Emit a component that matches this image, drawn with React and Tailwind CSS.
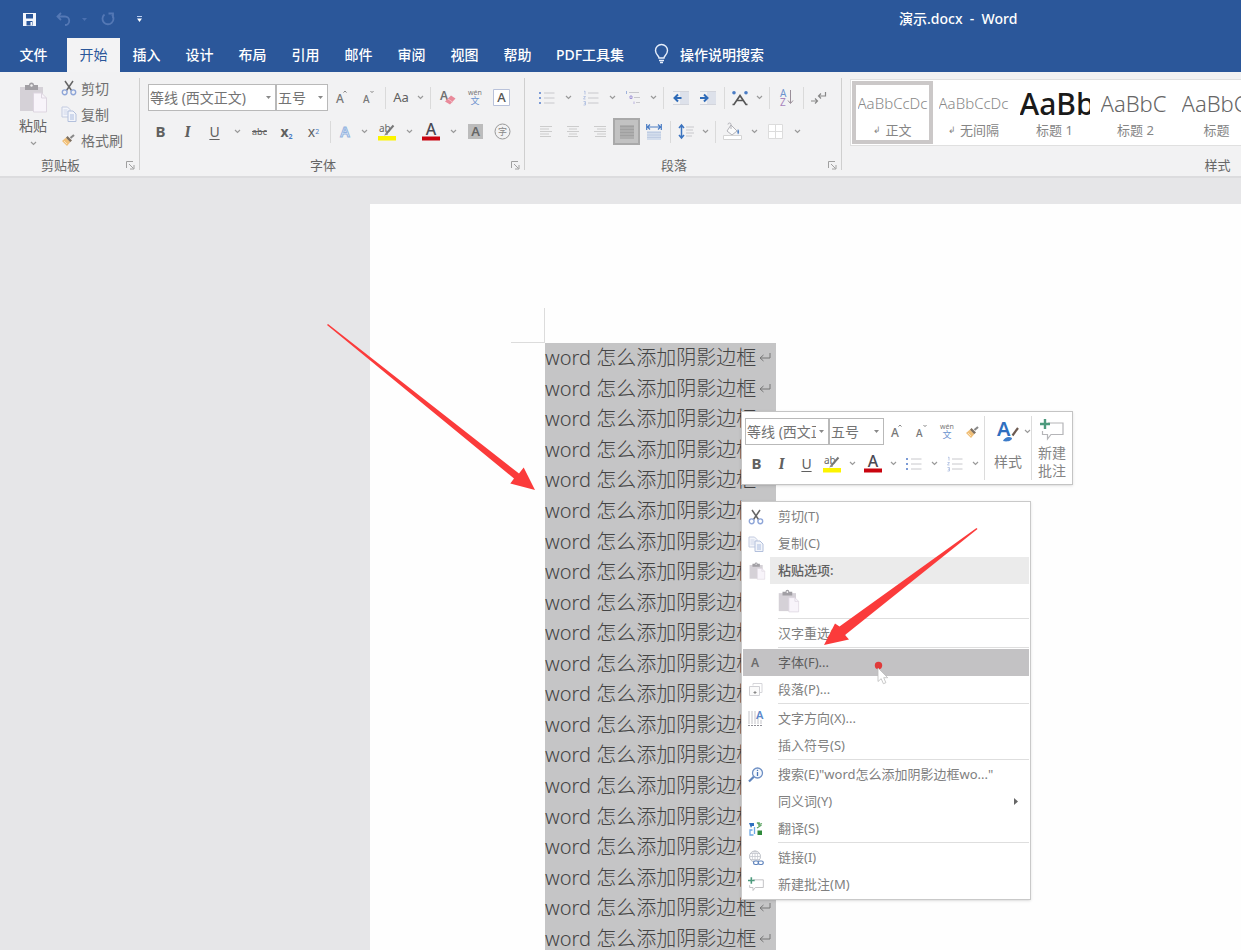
import React from "react";

const TABS = ["插入", "设计", "布局", "引用", "邮件", "审阅", "视图", "帮助"];
const LINES = Array.from({ length: 20 }, (_, i) => i);

/* ---------- icons ---------- */

const Svg = ({ w = 16, h = 16, box, children, className = "" }) => (
  <svg width={w} height={h} viewBox={box || `0 0 ${w} ${h}`} fill="none" aria-hidden="true" className={`shrink-0 overflow-visible ${className}`}>
    {children}
  </svg>
);

const Chevron = () => (
  <Svg w={7} h={5}>
    <path d="M1 1l2.500 2.400L6 1" stroke="#9a9a9a" strokeWidth="1.200" />
  </Svg>
);

const Triangle = () => (
  <Svg w={5} h={3}>
    <path d="M0 0h5L2.500 3z" fill="#888" />
  </Svg>
);

const Scissors = () => (
  <Svg>
    <path d="M4 1l6.500 9.500M12 1L5.500 10.500" stroke="#666" strokeWidth="1.500" />
    <circle cx="3.700" cy="12.300" r="2.400" stroke="#8fa6d8" strokeWidth="1.400" />
    <circle cx="12.300" cy="12.300" r="2.400" stroke="#8fa6d8" strokeWidth="1.400" />
  </Svg>
);

const Copy = () => (
  <Svg>
    <path d="M1 1h5.500l2.500 2.500V11H1z" fill="#f3f5fa" stroke="#c3cbe0" />
    <path d="M2.500 4h4M2.500 6h4M2.500 8h4" stroke="#cfd6ea" />
    <path d="M7 5h5l3 3v7.500H7z" fill="#f3f5fa" stroke="#b3c0dc" />
    <path d="M9 9h4M9 11h4M9 13h4" stroke="#aabce0" />
  </Svg>
);

const Brush = () => (
  <Svg w={14} h={14}>
    <path d="M13 2L9.500 5" stroke="#888" strokeWidth="2.200" />
    <path d="M6.500 3l4.500 4.500-2 1.800L4.800 5z" fill="#7d6f60" />
    <path d="M4.800 4.800l4.400 4.400L6 13 1 8z" fill="#f0bf78" />
    <path d="M3 8l3 3" stroke="#fae3bd" />
  </Svg>
);

const Clipboard = ({ w = 28, h = 31 }) => (
  <Svg w={w} h={h} box="0 0 28 31">
    <path d="M1 5h23v24H1z" fill="#d5d1d7" />
    <path d="M6 3h4a2.500 2.500 0 015 0h4v5H6z" fill="#a19fa4" />
    <circle cx="12.500" cy="3.500" r="1.200" fill="#f1f1f1" />
    <path d="M14.500 11h8l5 5v14h-13z" fill="#f8f4fa" stroke="#ddd5e0" />
    <path d="M22.500 11v5h5" stroke="#ddd5e0" />
  </Svg>
);

const Launcher = () => (
  <Svg w={9} h={9}>
    <path d="M.5 7V.5H7M3 3l4.500 4.500M8 4v4H4" stroke="#a0a0a0" />
  </Svg>
);

const Eraser = () => (
  <Svg>
    <text x="0" y="10" fontSize="12" fontFamily="Noto Sans" fontWeight="600" fill="#707070">A</text>
    <path d="M11 5.500l4.500 3-5.500 6L5 11.500z" fill="#e98a9a" />
    <path d="M8 9l4.500 3" stroke="#f3c0c8" />
  </Svg>
);

const Phonetic = () => (
  <Svg w={16} h={17}>
    <text x="8" y="6" fontSize="7" textAnchor="middle" fontFamily="Noto Sans" fill="#777">wén</text>
    <text x="8" y="15" fontSize="9" textAnchor="middle" fontFamily="Noto Sans CJK SC" fill="#6d93cf">文</text>
  </Svg>
);

const BoxedA = () => (
  <Svg w={17} h={17}>
    <path d="M.5.5h16v16H.5z" fill="#fff" stroke="#b9c2da" />
    <text x="8.500" y="13" fontSize="13" textAnchor="middle" fontFamily="Noto Sans" fontWeight="500" fill="#555">A</text>
  </Svg>
);

const ShadedA = () => (
  <Svg w={15} h={15}>
    <path d="M0 0h15v15H0z" fill="#bcbcbc" />
    <text x="7.500" y="12" fontSize="13" textAnchor="middle" fontFamily="Noto Sans" fontWeight="600" fill="#666">A</text>
  </Svg>
);

const CircledChar = () => (
  <Svg w={17} h={17}>
    <circle cx="8.500" cy="8.500" r="7.500" stroke="#999" />
    <text x="8.500" y="12" fontSize="9" textAnchor="middle" fontFamily="Noto Sans CJK SC" fill="#888">字</text>
  </Svg>
);

const OutlineA = () => (
  <Svg w={14} h={15}>
    <text x="7" y="12.500" fontSize="14" textAnchor="middle" fontFamily="Noto Sans" fontWeight="600" fill="#f4f8ff" stroke="#93b4e0" strokeWidth="1">A</text>
  </Svg>
);

const Highlighter = () => (
  <Svg w={18} h={18}>
    <text x="1" y="9" fontSize="10" fontFamily="Noto Sans" fill="#666">ab</text>
    <path d="M15.500 2.500L8 11" stroke="#777" strokeWidth="2" />
    <path d="M8.500 9.500L6 12.500l4-1z" fill="#888" />
    <path d="M0 13h18v4.500H0z" fill="#fcf400" />
  </Svg>
);

const FontColor = () => (
  <Svg w={18} h={18}>
    <text x="9" y="12" fontSize="16" textAnchor="middle" fontFamily="Noto Sans" fontWeight="500" fill="#4a4a55">A</text>
    <path d="M0 13.500h18v4H0z" fill="#c9040f" />
  </Svg>
);

const Bullets = () => (
  <Svg w={16} h={14}>
    <path d="M5 2h10.500M5 7h10.500M5 12h10.500" stroke="#c8c8cc" />
    <path d="M0 1h2v2H0zM0 6h2v2H0zM0 11h2v2H0z" fill="#7c9bd6" />
  </Svg>
);

const Numbering = () => (
  <Svg w={16} h={16}>
    <path d="M5 3h10.500M5 8h10.500M5 13h10.500" stroke="#c8c8cc" />
    <path d="M1 1.500l1-.5v3.500M.5 6.500h2L.5 9h2M.5 11.500h2v3.500h-2M1 13.200h1.500" stroke="#a9bade" strokeWidth=".8" />
  </Svg>
);

const Multilevel = () => (
  <Svg w={16} h={15}>
    <path d="M4 2.500h10M9 7.500h6M11 12.500h4" stroke="#c8c8cc" />
    <path d="M1.500 1v3" stroke="#9fb3dc" />
    <path d="M5 6h2v2.500H5z" stroke="#9c8fd6" strokeWidth=".9" />
    <path d="M9 11.500v2.500" stroke="#b9b2dd" />
  </Svg>
);

const Indent = ({ right }) => (
  <Svg w={16} h={14}>
    <path d="M7 1h9v12H7z" fill="#dde1ea" />
    <path d="M0 .5h16M0 13.500h16" stroke="#d3d5dc" />
    {right ? (
      <path d="M0 7h7M4 3.500L7.500 7 4 10.500" stroke="#2f6bb8" strokeWidth="2" />
    ) : (
      <path d="M1.500 7h7M5 3.500L1.500 7 5 10.500" stroke="#2f6bb8" strokeWidth="2" />
    )}
  </Svg>
);

const AsianLayout = () => (
  <Svg w={16} h={14}>
    <circle cx="2" cy="1.800" r="1.800" fill="#4a7cc4" />
    <circle cx="14" cy="1.800" r="1.800" fill="#4a7cc4" />
    <path d="M.5 13.500h1.500L8 4.500l6 9h1.500M4.500 9.500h7" stroke="#555" strokeWidth="1.700" />
  </Svg>
);

const Sort = () => (
  <Svg w={14} h={17}>
    <text x="0" y="8" fontSize="10" fontFamily="Noto Sans" fill="#6d93cf">A</text>
    <text x="0" y="17" fontSize="10" fontFamily="Noto Sans" fill="#a884bd">Z</text>
    <path d="M10.500 1v13M8 11.500l2.500 3 2.500-3" stroke="#9a8f99" />
  </Svg>
);

const ShowMarks = () => (
  <Svg w={16} h={14}>
    <path d="M0 10h6M4 7.500L6.500 10 4 12.500" stroke="#888" strokeWidth="1.200" />
    <path d="M14.500 1v4H8M10 2.500L7.500 5 10 7.500" stroke="#888" strokeWidth="1.200" />
  </Svg>
);

const Align = ({ kind }) => (
  <Svg w={12} h={12}>
    {kind === "left" && <path d="M0 .5h12M0 3h9M0 5.500h12M0 8h9M0 10.500h11" stroke="#ccc" />}
    {kind === "center" && <path d="M0 .5h12M2 3h8M0 5.500h12M2 8h8M1 10.500h10" stroke="#ccc" />}
    {kind === "right" && <path d="M0 .5h12M3 3h9M0 5.500h12M3 8h9M1 10.500h11" stroke="#ccc" />}
    {kind === "full" && (
      <>
        <path d="M-1-1h14v14H-1z" fill="#adadad" />
        <path d="M-1 .5h14M-1 3.500h14M-1 6.500h14M-1 9.500h14" stroke="#a0a0a0" />
      </>
    )}
  </Svg>
);

const Distribute = () => (
  <Svg w={16} h={16}>
    <path d="M1 3h14M4 .5L1.500 3 4 5.500M12 .5L14.500 3 12 5.500M.7 0v6M15.300 0v6" stroke="#4a7cc4" strokeWidth="1.200" />
    <path d="M1 7h14v9H1z" fill="#d3ddec" />
    <path d="M1 8.500h14M1 11h14M1 13.500h14" stroke="#bfcce2" />
  </Svg>
);

const LineSpacing = () => (
  <Svg w={16} h={15}>
    <path d="M3.500 1v13M1 4l2.500-3L6 4M1 11l2.500 3L6 11" stroke="#3b73bf" strokeWidth="1.500" />
    <path d="M8 3h8M8 6h7M8 9h8M8 12h6" stroke="#c8c8cc" />
  </Svg>
);

const Bucket = () => (
  <Svg w={19} h={17}>
    <path d="M8 2l6 6-5 4-5-4z" fill="#fbfbfb" stroke="#b3b3b8" />
    <path d="M8 6V1.500a1.500 1.500 0 00-3 0" stroke="#b3b3b8" />
    <path d="M15 6c1.500 2 1.500 4 0 5.500C14 9.500 14 8 15 6z" fill="#5584c4" />
    <path d="M.5 12.500h18v4H.5z" fill="#fff" stroke="#d4d4d4" />
  </Svg>
);

const Borders = () => (
  <Svg w={15} h={15}>
    <path d="M.5.5h14v14H.5zM7.500 0v15M0 7.500h15" fill="#fff" stroke="#dcdcdc" />
  </Svg>
);

const StylesA = () => (
  <Svg w={22} h={22}>
    <text x="0" y="16" fontSize="20" fontFamily="Noto Sans" fontWeight="600" fill="#2f6fc0">A</text>
    <path d="M21 8l-5.500 7.500" stroke="#6d5a50" strokeWidth="2.200" />
    <path d="M6 21c1-3.500 6-5.500 9-3 0 3-5 4-9 3z" fill="#3d7cc9" />
  </Svg>
);

const NewComment = ({ w = 24, h = 22 }) => (
  <Svg w={w} h={h} box="0 0 24 22">
    <path d="M8 4h15v11.500H11L7.500 20v-4.500H2.500V12" stroke="#b5b5b8" strokeWidth="1.200" />
    <path d="M5 0v10M0 5h10" stroke="#4d9a7d" strokeWidth="2.400" />
  </Svg>
);

const Paragraph = () => (
  <Svg>
    <path d="M5 3.500V1.500h9v9h-2" stroke="#d6d6da" />
    <path d="M1.500 4.500h10v9h-10z" fill="#fafafa" stroke="#d0d0d4" />
    <path d="M7 9v3M5.500 10.500h3" stroke="#888" />
  </Svg>
);

const TextDirection = () => (
  <Svg w={17} h={17}>
    <path d="M1 1v13M4 1v13M7 1v13M10 8v6M13 10v4" stroke="#c4c4c9" />
    <path d="M0 15.500h14" stroke="#8f8f96" strokeDasharray="2 1" />
    <text x="8" y="9" fontSize="11" fontFamily="Noto Sans" fontWeight="600" fill="#5b87c9">A</text>
  </Svg>
);

const Lookup = () => (
  <Svg>
    <circle cx="9.500" cy="6" r="5" stroke="#6f90c4" strokeWidth="1.300" fill="#f5f8fd" />
    <path d="M9.500 5v4M9.500 2.700v1.300" stroke="#4a76b8" strokeWidth="1.300" />
    <path d="M5.800 9.700L1 14.500" stroke="#5f84bd" strokeWidth="2.200" />
  </Svg>
);

const Translate = () => (
  <Svg>
    <path d="M1 2h5v3H4L3 7z" fill="#2f6fc0" />
    <path d="M6.500 6v7M4.500 9H2v5h3.500" stroke="#6fa9e6" strokeWidth="1.300" />
    <path d="M9 1.500l2 2 3-1M11 1v5M9 7l4.500-3" stroke="#5fa565" strokeWidth="1.300" />
    <path d="M9.500 9.500H14V14H9.500z" fill="#2f8a3b" />
  </Svg>
);

const LinkIcon = () => (
  <Svg>
    <circle cx="7" cy="6.500" r="5.500" stroke="#bcbfc6" />
    <path d="M7 1v11M1.500 6.500h11M3 3.500h8M3 9.500h8" stroke="#c4c7ce" strokeWidth=".8" />
    <ellipse cx="7" cy="6.500" rx="2.700" ry="5.500" stroke="#c4c7ce" strokeWidth=".8" />
    <rect x="5.500" y="11" width="5" height="3.500" rx="1.700" stroke="#5f84bd" strokeWidth="1.200" fill="#fff" />
    <rect x="10.300" y="11" width="5" height="3.500" rx="1.700" stroke="#5f84bd" strokeWidth="1.200" fill="#fff" />
  </Svg>
);

/* ---------- controls ---------- */

const Btn = ({ label, w = "w-[27px]", className = "", children }) => (
  <button type="button" aria-label={label} className={`flex h-[27px] shrink-0 items-center justify-center text-[#606060] ${w} ${className}`}>
    {children}
  </button>
);

const Drop = ({ label, w = "w-4" }) => (
  <Btn label={label} w={w}>
    <Chevron />
  </Btn>
);

const Sep = () => <span className="mx-[3px] h-[22px] w-px shrink-0 bg-[#dadada]" />;

const Combo = ({ label, value, w }) => (
  <span className={`relative flex h-[27px] shrink-0 border border-[#b9b9b9] bg-white ${w}`}>
    <select aria-label={label} className="w-full appearance-none overflow-hidden bg-transparent pr-3 pl-px text-[14px] leading-6 text-[#737373] outline-none">
      <option>{value}</option>
    </select>
    <span className="pointer-events-none absolute inset-y-0 right-1 flex items-center">
      <Triangle />
    </span>
  </span>
);

const GrowA = ({ shrink }) => (
  <Svg w={14} h={15}>
    <text x="1" y="13" fontSize={shrink ? 10 : 12} fontFamily="Noto Sans" fontWeight="500" fill="#777">A</text>
    <path d={shrink ? "M8.500 1l1.500 1.600L11.500 1" : "M8.500 2.600L10 1l1.500 1.600"} stroke="#888" />
  </Svg>
);

const Group = ({ name, w, children, launcher = true }) => (
  <section aria-label={name} className={`flex shrink-0 ${w}`}>
    <div className="flex min-w-0 flex-1 flex-col pt-[7px]">
      <div className="h-[78px]">{children}</div>
      <div className="flex h-[22px] items-center text-[13px] text-[#666]">
        <span className="flex-1 text-center">{name}</span>
        {launcher && (
          <button type="button" aria-label={`${name}设置`} className="flex w-[18px] justify-center">
            <Launcher />
          </button>
        )}
      </div>
    </div>
    <span className="my-[6px] w-px bg-[#cfcfcf]" />
  </section>
);

const StyleItem = ({ sample, sampleClass, name, mark, active }) => (
  <button
    type="button"
    className={`flex h-[63px] w-[81px] shrink-0 flex-col items-center border-4 ${active ? "border-[#cbc8c8]" : "border-transparent"}`}
  >
    <span className={`flex h-9 w-[70px] items-center overflow-hidden whitespace-nowrap ${sampleClass}`}>{sample}</span>
    <span className="flex items-center gap-1 text-[13px] leading-[18px] whitespace-nowrap text-[#858585]">
      {mark && <span className="text-[9px]">↲</span>}
      {name}
    </span>
  </button>
);

const MenuItem = ({ icon, label, active, sub }) => (
  <button type="button" role="menuitem" className={`flex h-[27px] w-full items-center text-left ${active ? "bg-[#c3c2c4] text-[#5c5c5c]" : ""}`}>
    <span className="flex w-[35px] shrink-0 items-center pl-[5px]">{icon}</span>
    <span className="flex-1 whitespace-nowrap">{label}</span>
    {sub && (
      <Svg w={5} h={7} className="mr-[10px]">
        <path d="M0 0l4 3.500L0 7z" fill="#666" />
      </Svg>
    )}
  </button>
);

const MenuSep = () => (
  <div role="separator" className="h-[2px] pl-[35px]">
    <div className="h-px bg-[#dedede]" />
  </div>
);

/* ---------- page ---------- */

const TitleBar = () => (
  <div className="flex h-[38px] items-center text-white">
    <div className="flex w-[899px] shrink-0 items-center pl-[23px]">
      <button type="button" aria-label="保存" className="mr-[20px]">
        <Svg w={13} h={13}>
          <path d="M0 0h13v13H0z" fill="#f4f7fc" />
          <path d="M3 1h7v4.500H3zM3.500 8h6v4.500h-6z" fill="#2b579a" />
          <path d="M7.500 9h1.500v3.500H7.500z" fill="#f4f7fc" />
        </Svg>
      </button>
      <button type="button" aria-label="撤消" className="mr-3">
        <Svg w={14} h={14}>
          <path d="M5 1L1.500 4.500 5 8M1.500 4.500H9a4 4 0 010 8.500" stroke="#5478b5" strokeWidth="1.800" />
        </Svg>
      </button>
      <button type="button" aria-label="撤消列表" className="mr-[14px]">
        <Svg w={5} h={3}>
          <path d="M0 0h5L2.500 3z" fill="#4a70b0" />
        </Svg>
      </button>
      <button type="button" aria-label="恢复" className="mr-[22px]">
        <Svg w={14} h={14}>
          <path d="M3.500 2.500a5.500 5.500 0 107.500.5M7.500 1.500H12V6" stroke="#5478b5" strokeWidth="1.800" />
        </Svg>
      </button>
      <button type="button" aria-label="自定义快速访问工具栏">
        <Svg w={5} h={6}>
          <path d="M0 .5h5" stroke="#b9cdf0" />
          <path d="M0 2.500h5L2.500 6z" fill="#fff" />
        </Svg>
      </button>
    </div>
    <h1 className="pb-0.5 text-[14px] font-medium whitespace-pre">{"演示.docx  -  Word"}</h1>
  </div>
);

const TabBar = () => (
  <nav className="flex h-[34px] items-stretch text-[14px] font-medium text-white [&>button]:pb-0.5">
    <button type="button" className="w-[67px] shrink-0">文件</button>
    <button type="button" className="w-[53px] shrink-0 bg-[#f3f3f4] font-normal text-[#2b579a]">开始</button>
    {TABS.map((t) => (
      <button key={t} type="button" className="w-[53px] shrink-0">
        {t}
      </button>
    ))}
    <button type="button" className="w-[92px] shrink-0">PDF工具集</button>
    <button type="button" className="ml-[18px] flex shrink-0 items-center gap-3">
      <Svg w={14} h={20}>
        <path d="M5 14c0-2-3.500-3.500-3.500-7.500a6 6 0 0112 0c0 4-3.500 5.500-3.500 7.500zM5 16.500h5M6 18.500h3" stroke="#e6eefb" strokeWidth="1.400" />
      </Svg>
      操作说明搜索
    </button>
  </nav>
);

const Ribbon = () => (
  <div className="flex h-[106px] overflow-hidden border-b-2 border-[#dcdcde] bg-[#f2f2f3]">
    <Group name="剪贴板" w="w-[140px]">
      <div className="flex gap-2 pl-[19px]">
        <button type="button" className="flex w-7 flex-col items-center pt-[3px] text-[14px] leading-5 text-[#666]">
          <Clipboard />
          <span className="mt-[3px] mb-[5px] whitespace-nowrap">粘贴</span>
          <Chevron />
        </button>
        <div className="flex flex-col pl-[6px] text-[14px] text-[#707070]">
          <button type="button" className="-mt-1 flex h-[26px] items-center gap-1"><Scissors />剪切</button>
          <button type="button" className="flex h-[26px] items-center gap-1"><Copy />复制</button>
          <button type="button" className="flex h-[26px] items-center gap-[6px] whitespace-nowrap"><Brush />格式刷</button>
        </div>
      </div>
    </Group>

    <Group name="字体" w="w-[385px]">
      <div className="flex flex-col gap-[7px] pt-[5px]">
        <div className="flex items-center pl-2">
          <Combo label="字体名称" value="等线 (西文正文)" w="w-[128px]" />
          <Combo label="字号" value="五号" w="w-[52px]" />
          <Btn label="增大字号"><GrowA /></Btn>
          <Btn label="减小字号"><GrowA shrink /></Btn>
          <Sep />
          <Btn label="更改大小写" w="w-6" className="text-[13px]">Aa</Btn>
          <Drop label="大小写选项" w="w-[14px]" />
          <Sep />
          <Btn label="清除格式"><Eraser /></Btn>
          <Btn label="拼音指南"><Phonetic /></Btn>
          <Btn label="字符边框"><BoxedA /></Btn>
        </div>
        <div className="flex items-center pl-[7px]">
          <Btn label="加粗" className="text-[15px] font-bold text-[#505050]">B</Btn>
          <Btn label="倾斜" className="font-serif text-[16px] font-bold text-[#505050] italic">I</Btn>
          <Btn label="下划线" className="text-[14px] underline underline-offset-2">U</Btn>
          <Drop label="下划线样式" w="w-[18px]" />
          <Btn label="删除线" className="text-[9px] line-through">abc</Btn>
          <Btn label="下标" className="text-[14px] font-bold"><span>x<sub className="text-[7px] text-[#4a7cc4]">2</sub></span></Btn>
          <Btn label="上标" className="text-[14px]"><span>x<sup className="text-[7px] text-[#4a7cc4]">2</sup></span></Btn>
          <Sep />
          <Btn label="文本效果" w="w-[22px]"><OutlineA /></Btn>
          <Drop label="文本效果选项" />
          <Btn label="突出显示" w="w-[30px]"><Highlighter /></Btn>
          <Drop label="突出显示颜色" w="w-[14px]" />
          <Btn label="字体颜色" w="w-[30px]"><FontColor /></Btn>
          <Drop label="字体颜色选项" w="w-[14px]" />
          <Btn label="字符底纹" w="w-[30px]"><ShadedA /></Btn>
          <Btn label="带圈字符" w="w-6"><CircledChar /></Btn>
        </div>
      </div>
    </Group>

    <Group name="段落" w="w-[317px]">
      <div className="flex flex-col gap-[7px] pt-[5px]">
        <div className="flex items-center pl-2">
          <Btn label="项目符号"><Bullets /></Btn>
          <Drop label="项目符号选项" />
          <Btn label="编号" w="w-[29px]"><Numbering /></Btn>
          <Drop label="编号选项" w="w-[14px]" />
          <Btn label="多级列表"><Multilevel /></Btn>
          <Drop label="多级列表选项" w="w-[14px]" />
          <Sep />
          <Btn label="减少缩进"><Indent /></Btn>
          <Btn label="增加缩进"><Indent right /></Btn>
          <Sep />
          <Btn label="中文版式" w="w-6"><AsianLayout /></Btn>
          <Drop label="中文版式选项" w="w-[14px]" />
          <Sep />
          <Btn label="排序"><Sort /></Btn>
          <Sep />
          <Btn label="显示编辑标记" w="w-6"><ShowMarks /></Btn>
        </div>
        <div className="flex items-center pl-[7px]">
          <Btn label="左对齐"><Align kind="left" /></Btn>
          <Btn label="居中"><Align kind="center" /></Btn>
          <Btn label="右对齐"><Align kind="right" /></Btn>
          <Btn label="两端对齐" className="border-2 border-[#a9a9a9] bg-[#c2c2c2]"><Align kind="full" /></Btn>
          <Btn label="分散对齐"><Distribute /></Btn>
          <Sep />
          <Btn label="行距" w="w-6"><LineSpacing /></Btn>
          <Drop label="行距选项" w="w-[14px]" />
          <Sep />
          <Btn label="底纹"><Bucket /></Btn>
          <Drop label="底纹选项" />
          <Btn label="边框"><Borders /></Btn>
          <Drop label="边框选项" />
        </div>
      </div>
    </Group>

    <Group name="样式" w="w-[752px]" launcher={false}>
      <div className="ml-2 flex h-[67px] overflow-hidden border border-[#e0e0e0] bg-white p-px">
        <StyleItem active mark sample="AaBbCcDc" sampleClass="text-[15px] font-light text-[#888]" name="正文" />
        <StyleItem mark sample="AaBbCcDc" sampleClass="text-[15px] font-light text-[#888]" name="无间隔" />
        <StyleItem sample="AaBb" sampleClass="text-[30px] font-medium text-[#1a1a1a]" name="标题 1" />
        <StyleItem sample="AaBbC" sampleClass="text-[22px] font-light text-[#666]" name="标题 2" />
        <StyleItem sample="AaBbC" sampleClass="text-[22px] font-light text-[#666]" name="标题" />
      </div>
    </Group>
  </div>
);

const MiniToolbar = () => (
  <div role="toolbar" aria-label="浮动工具栏" className="absolute top-[233px] left-[741px] flex border border-[#c4c4c4] bg-white pl-[3px] shadow-sm">
    <div className="flex flex-col gap-[5px] pt-[6px] pb-[6px]">
      <div className="flex items-center">
        <Combo label="浮动字体名称" value="等线 (西文正文)" w="w-[84px]" />
        <Combo label="浮动字号" value="五号" w="w-[55px]" />
        <Btn label="增大" w="w-[25px]"><GrowA /></Btn>
        <Btn label="减小" w="w-[25px]"><GrowA shrink /></Btn>
        <Btn label="拼音" w="w-[25px]"><Phonetic /></Btn>
        <Btn label="刷子" w="w-[25px]"><Brush /></Btn>
      </div>
      <div className="-ml-px flex items-center">
        <Btn label="粗体" w="w-[25px]" className="text-[15px] font-bold text-[#505050]">B</Btn>
        <Btn label="斜体" w="w-[25px]" className="font-serif text-[16px] font-bold text-[#505050] italic">I</Btn>
        <Btn label="下划线" w="w-[25px]" className="text-[14px] underline underline-offset-2">U</Btn>
        <Btn label="突出显示" w="w-[25px]"><Highlighter /></Btn>
        <Drop label="突出显示选项" />
        <Btn label="字体颜色" w="w-[25px]"><FontColor /></Btn>
        <Drop label="颜色选项" />
        <Btn label="项目符号" w="w-[25px]"><Bullets /></Btn>
        <Drop label="符号选项" />
        <Btn label="编号" w="w-[25px]"><Numbering /></Btn>
        <Drop label="编号选项" />
      </div>
    </div>
    <div className="my-1 flex border-l border-[#dcdcdc]">
      <button type="button" className="flex w-[46px] flex-col items-center gap-[9px] text-[14px] text-[#808080]">
        <span className="flex items-center gap-[5px] pt-1 pl-[11px]">
          <StylesA />
          <Chevron />
        </span>
        样式
      </button>
    </div>
    <div className="my-1 flex border-l border-[#dcdcdc]">
      <button type="button" className="flex w-[40px] flex-col items-center gap-[3px] pt-[3px] text-[14px] leading-[18px] text-[#858585]">
        <NewComment />
        <span>新建<br />批注</span>
      </button>
    </div>
  </div>
);

const ContextMenu = () => (
  <div role="menu" className="absolute top-[323px] left-[741px] w-[290px] border border-[#c9c9c9] bg-white p-px text-[13px] text-[#808080] shadow">
    <MenuItem icon={<Scissors />} label="剪切(T)" />
    <MenuItem icon={<Copy />} label="复制(C)" />
    <div className="flex h-[27px] items-center font-medium text-[#606060]">
      <span className="flex w-[27px] shrink-0 pl-[6px]"><Clipboard w={16} h={18} /></span>
      <span className="flex h-full flex-1 items-center bg-[#ebebeb] pl-2">粘贴选项:</span>
    </div>
    <button type="button" role="menuitem" aria-label="粘贴" className="flex h-[34px] w-full items-center pl-[35px]">
      <Clipboard w={21} h={24} />
    </button>
    <MenuSep />
    <MenuItem label="汉字重选(V)" />
    <MenuSep />
    <MenuItem active icon={<span className="pl-[3px] text-[12px] font-semibold text-[#6c6c6c]">A</span>} label="字体(F)..." />
    <MenuItem icon={<Paragraph />} label="段落(P)..." />
    <MenuSep />
    <MenuItem icon={<TextDirection />} label="文字方向(X)..." />
    <MenuItem label="插入符号(S)" />
    <MenuSep />
    <MenuItem icon={<Lookup />} label={'搜索(E)"word怎么添加阴影边框wo..."'} />
    <MenuItem label="同义词(Y)" sub />
    <MenuItem icon={<Translate />} label="翻译(S)" />
    <MenuSep />
    <MenuItem icon={<LinkIcon />} label="链接(I)" />
    <MenuItem icon={<NewComment w={16} h={15} />} label="新建批注(M)" />
  </div>
);

export default function App() {
  return (
    <div className="flex h-screen flex-col overflow-hidden bg-[#e6e6e8] font-['Noto_Sans','Noto_Sans_CJK_SC',sans-serif]">
      <header className="shrink-0 bg-[#2b579a]">
        <TitleBar />
        <TabBar />
        <Ribbon />
      </header>

      <main className="relative flex min-h-0 flex-1 overflow-hidden pt-[26px] pl-[370px]">
        <article className="flex flex-1 flex-col items-start bg-[#fefefe] pt-[104px] pl-[141px]">
          <div className="h-[35px] w-[34px] shrink-0 border-r border-b border-[#dcdcdc]" />
          <div className="ml-[34px] grid h-[611px] w-[231px] shrink-0 auto-rows-fr items-center bg-[#c5c5c6] text-[20px] leading-[30px] font-light text-[#444]">
            {LINES.map((i) => (
              <p key={i} className="flex items-center gap-[3px] whitespace-nowrap">
                word 怎么添加阴影边框
                <Svg w={12} h={10}>
                  <path d="M11 0v5H1M4.500 2L1 5l3.500 3" stroke="#777" />
                </Svg>
              </p>
            ))}
          </div>
        </article>

        <MiniToolbar />
        <ContextMenu />

        <svg className="pointer-events-none absolute top-[146px] left-[327px]" width="209" height="167" viewBox="0 0 209 167" aria-hidden="true">
          <path d="M0 1L1 0 192 149.500 196.700 143.500 208 166 183.300 159.500 187 154.500z" fill="#fb3b3b" />
        </svg>
        <svg className="pointer-events-none absolute top-[350px] left-[824px]" width="154" height="118" viewBox="0 0 154 118" aria-hidden="true">
          <path d="M152.500 0l1 1L21 107 25 111.500 0 117 11 95.500 15.500 98.500z" fill="#fb3b3b" />
        </svg>
        <svg className="pointer-events-none absolute top-[482px] left-[873px]" width="18" height="26" viewBox="0 0 18 26" aria-hidden="true">
          <circle cx="5.500" cy="5.500" r="3.700" fill="#e03a3a" />
          <path d="M5 8v13.500l3.200-2.800 2.200 5 2.500-1-2.200-5h4z" fill="#fff" stroke="#bbb" strokeWidth=".8" />
        </svg>
      </main>
    </div>
  );
}
